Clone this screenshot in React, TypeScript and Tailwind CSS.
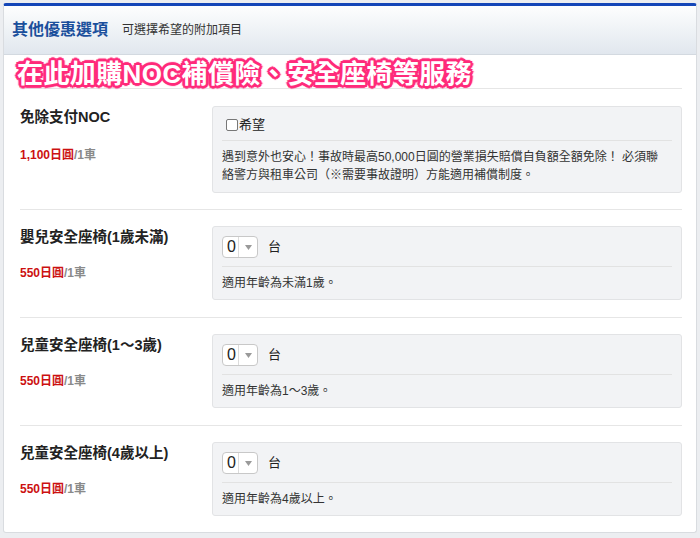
import React from 'react'

const font = { fontFamily: '"Liberation Sans", "Noto Sans CJK TC", sans-serif' }

type Item = {
  name: string
  price: string
  kind: 'check' | 'select'
  desc: React.ReactNode
}

const items: Item[] = [
  {
    name: '免除支付NOC',
    price: '1,100日圓',
    kind: 'check',
    desc: (
      <>
        遇到意外也安心！事故時最高50,000日圓的營業損失賠償自負額全額免除！ 必須聯
        <br />
        絡警方與租車公司（※需要事故證明）方能適用補償制度。
      </>
    ),
  },
  { name: '嬰兒安全座椅(1歲未滿)', price: '550日圓', kind: 'select', desc: '適用年齡為未滿1歲。' },
  { name: '兒童安全座椅(1～3歲)', price: '550日圓', kind: 'select', desc: '適用年齡為1～3歲。' },
  { name: '兒童安全座椅(4歲以上)', price: '550日圓', kind: 'select', desc: '適用年齡為4歲以上。' },
]

function QtySelect() {
  return (
    <div className="flex items-center h-[22px]">
      <div className="flex items-center h-[22px] w-[36px] bg-white border border-[#c8c8c8] rounded-[4px]">
        <span className="w-[15px] pl-[4px] text-[16px] leading-none text-[#222]">0</span>
        <span className="h-full w-px bg-[#dcdcdc]" />
        <span className="flex-1 flex justify-center">
          <svg width="7" height="5" viewBox="0 0 7 5">
            <path d="M0 0h7L3.5 5z" fill="#9a9a9a" />
          </svg>
        </span>
      </div>
      <span className="ml-[10px] text-[13px] text-[#222]">台</span>
    </div>
  )
}

function Row({ item, first }: { item: Item; first: boolean }) {
  return (
    <div className={`flex border-t border-[#e6e6e6] ${first ? 'pt-[17px] pb-[16px]' : 'pt-[16px] pb-[17px]'}`}>
      <div className="w-[192px] shrink-0 pt-[1px]">
        <div className={`text-[14.5px] font-bold text-[#222] leading-[20px] ${first ? 'mb-[20px]' : 'mb-[18px]'}`}>
          {item.name}
        </div>
        <div className="text-[12px] font-bold leading-[16px]">
          <span className="text-[#cc1111]">{item.price}</span>
          <span className="text-[#8a8a8a]">/1車</span>
        </div>
      </div>
      <div className="flex-1 bg-[#f2f3f5] border border-[#e2e3e5] rounded-[3px] px-[9px]">
        {item.kind === 'check' ? (
          <div className="flex items-center h-[20px] mt-[8px] mb-[5px] pl-[4px] text-[13px] text-[#222]">
            <span className="w-[12px] h-[12px] border border-[#777] rounded-[2px] bg-white mr-[1px]" />
            希望
          </div>
        ) : (
          <div className="mt-[9px] mb-[8px]">
            <QtySelect />
          </div>
        )}
        <div className="border-t border-[#e2e2e2]" />
        <div
          className={`text-[12px] leading-[18px] text-[#333] ${
            item.kind === 'check' ? 'pt-[7px] pb-[8px]' : 'pt-[7px] pb-[7px]'
          }`}
        >
          {item.desc}
        </div>
      </div>
    </div>
  )
}

export default function App() {
  return (
    <div className="w-[700px] h-[538px] bg-[#eceef1] pt-[3px] px-[3px] overflow-hidden" style={font}>
      <div className="bg-white border-t-[3px] border-x border-b border-t-[#1446b8] border-x-[#d9dce0] border-b-[#d9dce0] rounded-[3px] h-[530px]">
        {/* Header */}
        <div className="h-[49px] flex items-center px-[8px] bg-gradient-to-b from-[#fdfefe] to-[#e1e7ee] border-b border-[#d3d9e0]">
          <h2 className="text-[16px] font-bold text-[#1b4f9c]">其他優惠選項</h2>
          <span className="ml-[14px] text-[12px] text-[#333]">可選擇希望的附加項目</span>
        </div>

        <div className="pl-[13px] pr-[14px]">
          {/* Annotation */}
          <div className="h-[33px] flex items-center pt-[4px]">
            <span className="text-[26px] font-bold text-white leading-none tracking-[0.4px] [text-shadow:2px_0_0_#ff2a7a,-2px_0_0_#ff2a7a,0_2px_0_#ff2a7a,0_-2px_0_#ff2a7a,2px_2px_0_#ff2a7a,-2px_-2px_0_#ff2a7a,2px_-2px_0_#ff2a7a,-2px_2px_0_#ff2a7a,3px_0_1px_#ff2a7a,-3px_0_1px_#ff2a7a,0_3px_1px_#ff2a7a,0_-3px_1px_#ff2a7a]">
              在此加購NOC補償險、安全座椅等服務
            </span>
          </div>

          <div className="pl-[3px]">
            {items.map((it, i) => (
              <Row key={it.name} item={it} first={i === 0} />
            ))}
          </div>
        </div>
      </div>
    </div>
  )
}
